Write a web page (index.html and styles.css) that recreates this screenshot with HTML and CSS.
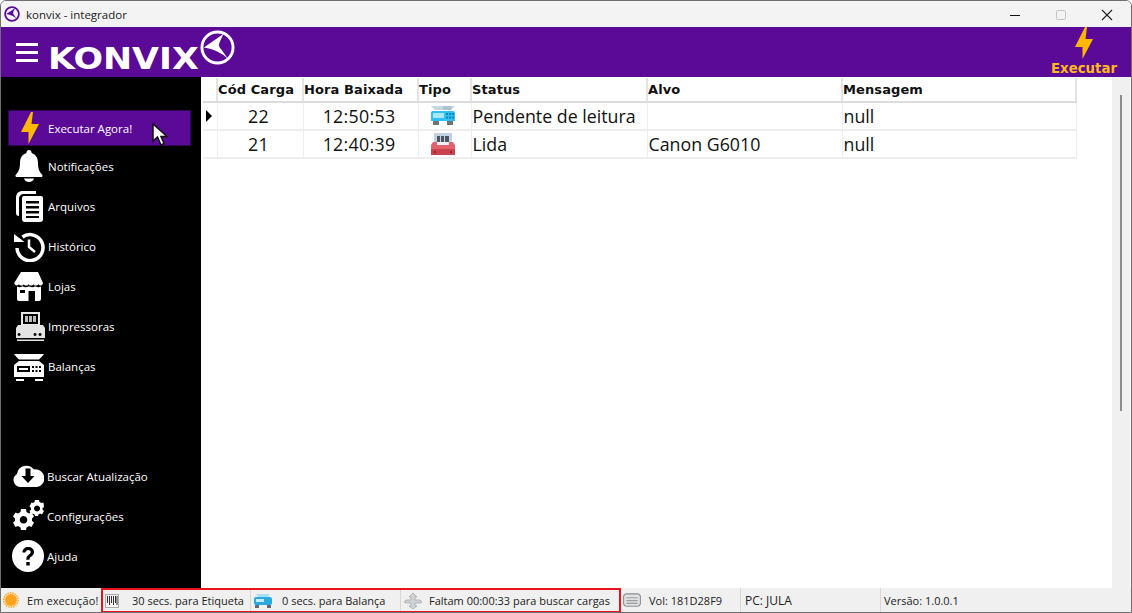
FILE: index.html
```html
<!DOCTYPE html>
<html>
<head>
<meta charset="utf-8">
<title>konvix - integrador</title>
<link rel="stylesheet" href="styles.css">
</head>
<body>
<div class="janela">
    <div class="titulo">
        <svg class="titulo-logo" viewBox="0 0 36 36"><circle cx="18" cy="18" r="15.500" fill="none" stroke="#5a0a96" stroke-width="4"/><path d="M5 18 L25 5 L21 13 Q19 17 23 21 L29 30 Q20 20 5 18Z" fill="#5a0a96"/></svg>
        <span class="titulo-texto">konvix - integrador</span>
        <div class="titulo-botoes">
            <svg class="win-btn" viewBox="0 0 46 27"><path d="M18 14.500H28" stroke="#111" stroke-width="1"/></svg>
            <svg class="win-btn" viewBox="0 0 46 27"><rect x="18.500" y="9.500" width="9" height="9" rx="1" fill="none" stroke="#c4c4c4"/></svg>
            <svg class="win-btn" viewBox="0 0 46 27"><path d="M18 9L28 19M28 9L18 19" stroke="#222" stroke-width="1.100"/></svg>
        </div>
    </div>

    <div class="topo">
        <div class="menu-btn"><span></span><span></span><span></span></div>
        <span class="marca">KONVIX</span>
        <svg class="marca-logo" viewBox="0 0 36 36"><circle cx="18" cy="18" r="16" fill="none" stroke="#fff" stroke-width="3"/><path d="M4 18 L24 4 L20 13 Q18.500 17 22 20 L29 30 Q19 20 4 18Z" fill="#fff"/></svg>
        <div class="executar">
            <svg class="raio-topo" viewBox="0 0 18 32"><path d="M10 0L0 20H7.500V32L18 12H10.500L12 0Z" fill="#ffb700"/></svg>
            <span>Executar</span>
        </div>
    </div>

    <div class="meio">
        <nav class="lateral">
            <div class="grupo-menu">
                <div class="item ativo">
                    <svg class="raio" viewBox="0 0 18 32"><path d="M10 0L0 20H7.500V32L18 12H10.500L12 0Z" fill="#ffb700"/></svg>
                    <span>Executar Agora!</span>
                    <svg class="cursor" viewBox="0 0 16 24"><path d="M1 1V18L5.500 14L9 22L12 20.500L9 13.500H15Z" fill="#fff" stroke="#111" stroke-width="1.500"/></svg>
                </div>
                <div class="item">
                    <svg class="ico" viewBox="0 0 28 32"><path d="M14 0a2.500 2.500 0 0 1 2.500 3C21 4.500 23 8 23 13c0 6 1.500 9 4 11.500 1 1 .5 2.500-1 2.500H2c-1.500 0-2-1.500-1-2.500C3.500 22 5 19 5 13c0-5 2-8.500 6.500-10A2.500 2.500 0 0 1 14 0ZM9 28.500h10c-.5 2-2.500 3.500-5 3.500s-4.500-1.500-5-3.500Z" fill="#fff"/></svg>
                    <span>Notificações</span>
                </div>
                <div class="item">
                    <svg class="ico" viewBox="0 0 30 32"><path d="M22 1H9C4.500 1 2 3.500 2 8V23c0 2 1 3 3 3V9c0-3 2-5 5-5h12Z" fill="#fff"/><path fill-rule="evenodd" d="M10 6H27a2 2 0 0 1 2 2V29a3 3 0 0 1-3 3H11a3 3 0 0 1-3-3V8a2 2 0 0 1 2-2ZM12 11v2.500H25V11ZM12 16v2.500H25V16ZM12 21v2.500H25V21ZM12 26v2H25v-2Z" fill="#fff"/></svg>
                    <span>Arquivos</span>
                </div>
                <div class="item">
                    <svg class="ico" viewBox="0 0 32 32"><path d="M9.500 7A13 13 0 1 1 4 18" fill="none" stroke="#fff" stroke-width="3.500"/><path d="M1 4L11.500 12H1Z" fill="#fff"/><path d="M16 9.500V17L22 22" fill="none" stroke="#fff" stroke-width="2.500"/></svg>
                    <span>Histórico</span>
                </div>
                <div class="item">
                    <svg class="ico" viewBox="0 0 30 32"><path d="M7 2H24L29 13c0 3-4.500 3-4.800 1-.3 2-4.600 2-4.800 0-.3 2-4.500 2-4.800 0-.3 2-4.600 2-4.800 0-.3 2-4.600 2-4.800 0-.3 2-4.500 2-4.800-1Z" fill="#fff"/><path fill-rule="evenodd" d="M3 16.500c2 1 4 .8 5.500-.3 2 1.300 4.500 1.300 6.500 0 2 1.300 4.500 1.300 6.500 0 1.500 1.100 3.500 1.300 5.500.3V29a2 2 0 0 1-2 2H5a2 2 0 0 1-2-2ZM6 20v3h5v-3ZM14.500 21v10H21V21Z" fill="#fff"/></svg>
                    <span>Lojas</span>
                </div>
                <div class="item">
                    <svg class="ico" viewBox="0 0 32 32"><path fill-rule="evenodd" d="M8 2H27V15H8ZM10 4V14H25V4Z" fill="#e8e8e8"/><path d="M12 6h3v6h-3ZM16 6h3v6h-3ZM20 6h3v6h-3Z" fill="#bbb"/><path fill-rule="evenodd" d="M5 15H30L32 18V28H3V18ZM6 23a1.500 1.500 0 1 0 .1 0ZM22 23a1.500 1.500 0 1 0 .1 0ZM27 23a1.500 1.500 0 1 0 .1 0Z" fill="#e4e4e4"/><path d="M4 29.500H31V31H4Z" fill="#e4e4e4"/></svg>
                    <span>Impressoras</span>
                </div>
                <div class="item">
                    <svg class="ico" viewBox="0 0 32 32"><path d="M1 4H31L29 6.500 26 9.500H6L3 6.500Z" fill="#fff"/><path fill-rule="evenodd" d="M6 11H26L31 15V27H1V15ZM4 16v6H17V16ZM6 18h9v2H6ZM19 16v2h2v-2ZM22.500 16v2h2v-2ZM26 16v2h2v-2ZM19 20v2h2v-2ZM22.500 20v2h2v-2ZM26 20v2h2v-2Z" fill="#fff"/><path d="M3 29H11V31H3ZM22 29H30V31H22Z" fill="#fff"/></svg>
                    <span>Balanças</span>
                </div>
            </div>
            <div class="grupo-menu">
                <div class="item baixo">
                    <svg class="ico" viewBox="0 0 32 32"><path fill-rule="evenodd" d="M8 27A7 7 0 0 1 5 14 9.500 9.500 0 0 1 22 9.500 8.800 8.800 0 0 1 25 27ZM13.500 8.500v7.500H9.500l6.500 7 6.500-7H18.500V8.500Z" fill="#fff"/></svg>
                    <span>Buscar Atualização</span>
                </div>
                <div class="item baixo">
                    <svg class="ico" viewBox="0 0 32 32"><path fill-rule="evenodd" d="M10 12H15L15.500 15 18 16.500 20.500 15.500 23 19.500 21 21.500V24L23 25.500 20.500 30 18 29 15.500 30.500 15 33H10L9.500 30.500 7 29 4.500 30 2 25.500 4 24V21.500L2 19.500 4.500 15.500 7 16.500 9.500 15ZM12.500 19a3.800 3.800 0 1 0 .1 0Z" transform="translate(-1 -3)" fill="#fff"/><path fill-rule="evenodd" d="M23 0H27L27.500 2 29.500 3 31.500 2.500 32 7 30.500 8V9.500L32 11 30 14.500 28 13.500 26.500 14.500 26 16H23L22.500 14.500 21 13.500 19 14.500 17.500 11 19 9.500V8L17.500 6.500 19.500 2.500 21 3 22.500 2ZM25 5.500a3 3 0 1 0 .1 0Z" fill="#fff"/></svg>
                    <span>Configurações</span>
                </div>
                <div class="item baixo">
                    <svg class="ico" viewBox="0 0 32 32"><circle cx="16" cy="16" r="16" fill="#fff"/><path d="M10.500 12.500C10.500 9 13 7 16.200 7c3.300 0 5.800 2 5.800 5 0 2.500-1.500 3.700-3 4.800-1.200.8-1.500 1.500-1.500 3h-3.200c0-2.500.7-3.800 2.400-5 1.200-.9 2-1.500 2-2.700 0-1.300-1-2.100-2.500-2.100s-2.600 1-2.700 2.500ZM14.300 22h3.400v3.500h-3.400Z" fill="#000"/></svg>
                    <span>Ajuda</span>
                </div>
            </div>
        </nav>

        <main class="conteudo">
            <table class="grade">
                <thead>
                    <tr>
                        <th class="col-ind"></th>
                        <th class="col-cod">Cód Carga</th>
                        <th class="col-hora">Hora Baixada</th>
                        <th class="col-tipo">Tipo</th>
                        <th class="col-status">Status</th>
                        <th class="col-alvo">Alvo</th>
                        <th class="col-msg">Mensagem</th>
                    </tr>
                </thead>
                <tbody>
                    <tr>
                        <td class="ind"><span class="seta"></span></td>
                        <td class="centro">22</td>
                        <td class="centro">12:50:53</td>
                        <td class="centro">
                            <svg class="tipo-ico" viewBox="0 0 24 20"><path d="M0 0H24L20 4H4Z" fill="#c5d6dc"/><rect x="12" y="0" width="8" height="4" fill="#a9c6d0"/><path d="M2 5H22Q24 5 24 7V15H0V7Q0 5 2 5Z" fill="#2fc0f2"/><rect x="2" y="7" width="11" height="5" fill="#a8e6fb"/><path d="M15 7h2v2h-2ZM18 7h2v2h-2ZM21 7h2v2h-2ZM15 10.500h2v2h-2ZM18 10.500h2v2h-2ZM21 10.500h2v2h-2Z" fill="#0e86b8"/><path d="M2 15H8V19H2ZM16 15H22V19H16Z" fill="#6d7579"/></svg>
                        </td>
                        <td>Pendente de leitura</td>
                        <td></td>
                        <td>null</td>
                    </tr>
                    <tr>
                        <td class="ind"></td>
                        <td class="centro">21</td>
                        <td class="centro">12:40:39</td>
                        <td class="centro">
                            <svg class="tipo-ico tipo-impressora" viewBox="0 0 24 22"><rect x="3" y="0" width="18" height="12" fill="#c6d0e4"/><rect x="6" y="3" width="12" height="6" fill="#4b5563"/><path d="M9 3h1v6H9ZM13 3h1v6h-1Z" fill="#c6d0e4"/><path d="M2 9H22L24 12V20Q24 22 22 22H2Q0 22 0 20V12Z" fill="#e0626e"/><rect x="6" y="9" width="12" height="3" fill="#eef0f6"/><rect x="0" y="16" width="24" height="6" fill="#c9434f"/><path d="M3 18h2v2H3ZM19 18h2v2h-2Z" fill="#8e2733"/></svg>
                        </td>
                        <td>Lida</td>
                        <td>Canon G6010</td>
                        <td>null</td>
                    </tr>
                </tbody>
            </table>
            <div class="rolagem"><div class="rolagem-barra"></div></div>
        </main>
    </div>

    <footer class="status">
        <div class="s-celula s-exec">
            <svg class="s-ico sol" viewBox="0 0 16 16"><circle cx="8" cy="8" r="6" fill="#ffa41c"/><circle cx="8" cy="8" r="7.200" fill="none" stroke="#ffa41c" stroke-width="1.500" stroke-dasharray="1.500 1"/></svg>
            <span>Em execução!</span>
        </div>
        <div class="s-grupo">
            <div class="s-celula s-etq">
                <svg class="s-ico" viewBox="0 0 16 16"><rect x="1.500" y="1.500" width="13" height="13" fill="#f4f4f4" stroke="#aaa"/><path d="M3.500 3v7M5.500 3v9M7.500 3v7M9.500 3v9M11.500 3v7M13 3v9" stroke="#333" stroke-width="1"/></svg>
                <span>30 secs. para Etiqueta</span>
            </div>
            <div class="s-celula s-bal">
                <svg class="s-ico s-ico-largo" viewBox="0 0 18 14"><path d="M2 0H16L14 3H4Z" fill="#a9dff5"/><rect y="3" width="18" height="8" rx="2" fill="#2aa9de"/><rect x="2" y="5" width="8" height="3" fill="#bfeeff"/><path d="M1 11H5V14H1ZM13 11H17V14H13Z" fill="#667"/></svg>
                <span>0 secs. para Balança</span>
            </div>
            <div class="s-celula s-falta">
                <svg class="s-ico s-ico-largo" viewBox="0 0 18 16"><path d="M9 0L13 4H11V7H16L18 9 16 10H11V13H13L9 16 5 13H7V10H2L0 9 2 7H7V4H5Z" fill="#cfd3d6" stroke="#9ba1a5" stroke-width=".7"/></svg>
                <span>Faltam 00:00:33 para buscar cargas</span>
            </div>
        </div>
        <div class="s-celula s-vol">
            <svg class="s-ico s-ico-largo" viewBox="0 0 16 12"><rect x=".5" y=".5" width="15" height="11" rx="3" fill="#dfe1e3" stroke="#8d9194"/><path d="M3 4H13M3 6.500H13M3 9H13" stroke="#9a9ea1"/></svg>
            <span>Vol: 181D28F9</span>
        </div>
        <div class="s-celula s-pc"><span>PC: JULA</span></div>
        <div class="s-celula s-ver"><span>Versão: 1.0.0.1</span></div>
    </footer>
</div>
</body>
</html>
```

FILE: styles.css
```css
* {
    box-sizing: border-box;
}
html, body {
    margin: 0;
    height: 100%;
    overflow: hidden;
    background: #fff;
}
.janela {
    width: 1132px;
    height: 613px;
    display: flex;
    flex-direction: column;
    border: 1px solid #6f6f6f;
    border-radius: 6px 6px 0 0;
    overflow: hidden;
    font-family: "Open Sans", "Noto Sans", sans-serif;
}

/* barra de titulo */
.titulo {
    height: 26px;
    flex: none;
    display: flex;
    align-items: center;
    background: #f3f3f3;
}
.titulo-logo {
    width: 16px;
    height: 16px;
    margin-left: 3px;
}
.titulo-texto {
    margin-left: 6px;
    font-size: 11.500px;
    color: #222;
}
.titulo-botoes {
    margin-left: auto;
    display: flex;
    margin-right: 1px;
}
.win-btn {
    width: 46px;
    height: 27px;
    display: block;
}

/* topo roxo */
.topo {
    height: 50px;
    flex: none;
    display: flex;
    align-items: flex-start;
    background: #5a0a96;
}
.menu-btn {
    width: 22px;
    margin: 16px 0 0 15px;
    display: flex;
    flex-direction: column;
    gap: 5px;
}
.menu-btn span {
    display: block;
    height: 3px;
    background: #fff;
}
.marca {
    width: 152px;
    margin: 14px 0 0 10px;
    font-family: "DejaVu Sans", sans-serif;
    font-weight: bold;
    font-size: 30px;
    line-height: 36px;
    color: #fff;
    transform: scaleX(1.16);
    transform-origin: left center;
}
.marca-logo {
    width: 35px;
    height: 35px;
    margin: 3px 0 0 0;
}
.executar {
    margin-left: auto;
    margin-right: 13px;
    width: 68px;
    display: flex;
    flex-direction: column;
    align-items: center;
    color: #ffb81c;
    font-family: "DejaVu Sans", sans-serif;
    font-weight: bold;
    font-size: 13.300px;
    line-height: 16px;
}
.raio-topo {
    width: 18px;
    height: 32px;
    display: block;
    margin-bottom: 2px;
}

/* corpo */
.meio {
    flex: 1;
    display: flex;
    min-height: 0;
}
.lateral {
    width: 200px;
    flex: none;
    background: #000;
    color: #fff;
    display: flex;
    flex-direction: column;
    justify-content: space-between;
    padding: 33px 0 12px 0;
    font-size: 11.500px;
}
.grupo-menu {
    display: flex;
    flex-direction: column;
}
.item {
    height: 40px;
    display: flex;
    align-items: center;
    padding-left: 12px;
    gap: 3px;
}
.item .ico {
    width: 32px;
    height: 32px;
    flex: none;
}
.item.baixo {
    padding-left: 11px;
}
.item.ativo {
    height: 36px;
    margin: 0 10px 0 7px;
    padding-left: 12px;
    background: #5a0a96;
    position: relative;
    border: 1px solid #2a0a50;
}
.raio {
    width: 18px;
    height: 32px;
    flex: none;
    margin-right: 6px;
}
.cursor {
    position: absolute;
    left: 143px;
    top: 12px;
    width: 16px;
    height: 24px;
}

/* grade */
.conteudo {
    flex: 1;
    display: flex;
    justify-content: space-between;
    background: #fff;
    min-width: 0;
}
.grade {
    margin: 1px 0 0 2px;
    border-collapse: collapse;
    table-layout: fixed;
    width: 874px;
    height: 80px;
    font-size: 17.800px;
    color: #111;
}
.grade th {
    height: 24px;
    padding: 0 0 0 0;
    text-align: left;
    font-family: "DejaVu Sans", sans-serif;
    font-size: 13px;
    font-weight: bold;
    letter-spacing: .1px;
    border-right: 2px solid #e4e4e4;
    border-bottom: 2px solid #dcdcdc;
}
.grade td {
    height: 28px;
    padding: 0 1px;
    border-right: 1px solid #eee;
    border-bottom: 2px solid #eee;
}
.grade td.centro {
    text-align: center;
    padding-right: 4px;
    letter-spacing: .3px;
}
.grade td.ind {
    padding: 0 0 0 3px;
}
.col-ind { width: 14px; }
.col-cod { width: 86px; }
.col-hora { width: 115px; }
.col-tipo { width: 53px; }
.col-status { width: 176px; }
.col-alvo { width: 195px; }
.seta {
    display: block;
    width: 0;
    height: 0;
    border-left: 6px solid #000;
    border-top: 6px solid transparent;
    border-bottom: 6px solid transparent;
}
.tipo-ico {
    display: block;
    width: 24px;
    height: 20px;
    margin: 0 auto;
}
.tipo-impressora {
    height: 22px;
}
.rolagem {
    width: 18px;
    margin-right: 1px;
    background: #f0f0f0;
    display: flex;
    justify-content: center;
    padding-top: 18px;
}
.rolagem-barra {
    width: 2px;
    height: 316px;
    background: #8b8b8b;
}

/* barra de status */
.status {
    height: 24px;
    flex: none;
    display: flex;
    align-items: stretch;
    background: #f0f0f0;
    font-size: 11px;
    color: #222;
}
.s-celula {
    display: flex;
    align-items: center;
    white-space: nowrap;
    border-right: 1px solid #d7d7d7;
}
.s-exec {
    width: 100px;
    padding-left: 2px;
    gap: 8px;
    border-right: 0;
    letter-spacing: .1px;
}
.s-grupo {
    display: flex;
    width: 520px;
    border: 2px solid #e8131c;
    height: 25px;
}
.s-etq { width: 148px; padding-left: 1px; gap: 12px; }
.s-bal { width: 150px; padding-left: 3px; gap: 10px; }
.s-falta { flex: 1; padding-left: 3px; gap: 7px; border-right: 0; }
.s-vol { width: 120px; padding-left: 2px; gap: 8px; }
.s-pc { width: 140px; padding-left: 4px; font-size: 12px; }
.s-ver { flex: 1; padding-left: 3px; border-right: 0; }
.s-ico {
    width: 16px;
    height: 16px;
    flex: none;
}
.s-ico-largo {
    width: 18px;
}
```
